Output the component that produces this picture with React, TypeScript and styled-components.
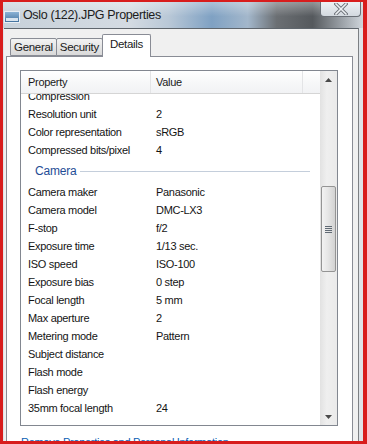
import React from 'react';
import styled, { createGlobalStyle } from 'styled-components';

const GlobalStyle = createGlobalStyle`
  html, body {
    margin: 0;
    padding: 0;
    background: #ffffff;
  }
  body {
    font-family: "Liberation Sans", Arial, sans-serif;
  }
`;

interface Prop {
  name: string;
  value?: string;
}

const imageProps: Prop[] = [
  { name: 'Compression' },
  { name: 'Resolution unit', value: '2' },
  { name: 'Color representation', value: 'sRGB' },
  { name: 'Compressed bits/pixel', value: '4' },
];

const cameraProps: Prop[] = [
  { name: 'Camera maker', value: 'Panasonic' },
  { name: 'Camera model', value: 'DMC-LX3' },
  { name: 'F-stop', value: 'f/2' },
  { name: 'Exposure time', value: '1/13 sec.' },
  { name: 'ISO speed', value: 'ISO-100' },
  { name: 'Exposure bias', value: '0 step' },
  { name: 'Focal length', value: '5 mm' },
  { name: 'Max aperture', value: '2' },
  { name: 'Metering mode', value: 'Pattern' },
  { name: 'Subject distance' },
  { name: 'Flash mode' },
  { name: 'Flash energy' },
  { name: '35mm focal length', value: '24' },
];

const tabs = ['General', 'Security', 'Details'];

const App = () => {
  return (
    <>
      <GlobalStyle />
      <Frame>
        <Window>
          <TitleBar>
            <TitleIcon width="16" height="12" viewBox="0 0 16 12">
              <defs>
                <linearGradient id="ti" x1="0" y1="0" x2="0" y2="1">
                  <stop offset="0" stopColor="#8fb6d8" />
                  <stop offset="1" stopColor="#3f6f9c" />
                </linearGradient>
              </defs>
              <rect x="0.5" y="0.5" width="15" height="11" fill="url(#ti)" stroke="#e8eef4" />
              <rect x="2" y="7" width="12" height="3" fill="#d9e4ee" />
            </TitleIcon>
            <TitleText>Oslo (122).JPG Properties</TitleText>
            <CloseButton>
              <svg width="14" height="12" viewBox="0 0 14 12">
                <path d="M2 1 L12 11 M12 1 L2 11" stroke="#6c7178" strokeWidth="3.4" strokeLinecap="square" />
                <path d="M2 1 L12 11 M12 1 L2 11" stroke="#eef1f4" strokeWidth="1.6" strokeLinecap="square" />
              </svg>
            </CloseButton>
          </TitleBar>
          <Client>
            <TabStrip>
              {tabs.map(t => (
                <Tab key={t} active={t === 'Details'}>
                  {t}
                </Tab>
              ))}
            </TabStrip>
            <Panel>
              <ListBox>
                <ListMain>
                  <Header>
                    <HeaderCell width={130}>Property</HeaderCell>
                    <HeaderCell width={152}>Value</HeaderCell>
                    <HeaderFiller />
                  </Header>
                  <Viewport>
                    <Rows>
                      {imageProps.map(p => (
                        <Row key={p.name}>
                          <span>{p.name}</span>
                          <span>{p.value}</span>
                        </Row>
                      ))}
                      <GroupRow>
                        <GroupTitle>Camera</GroupTitle>
                        <GroupLine />
                      </GroupRow>
                      {cameraProps.map(p => (
                        <Row key={p.name}>
                          <span>{p.name}</span>
                          <span>{p.value}</span>
                        </Row>
                      ))}
                    </Rows>
                  </Viewport>
                </ListMain>
                <ScrollBar>
                  <ArrowBox>
                    <svg width="7" height="4" viewBox="0 0 7 4">
                      <path d="M0 4 L3.5 0 L7 4 Z" fill="#4a4a4a" />
                    </svg>
                  </ArrowBox>
                  <Track>
                    <Thumb>
                      <svg width="7" height="7" viewBox="0 0 7 7">
                        <path d="M0 0.5 H7 M0 2.5 H7 M0 4.5 H7 M0 6.5 H7" stroke="#606a74" strokeWidth="1" />
                      </svg>
                    </Thumb>
                  </Track>
                  <ArrowBox>
                    <svg width="7" height="4" viewBox="0 0 7 4">
                      <path d="M0 0 L3.5 4 L7 0 Z" fill="#4a4a4a" />
                    </svg>
                  </ArrowBox>
                </ScrollBar>
              </ListBox>
              <RemoveLink>Remove Properties and Personal Information</RemoveLink>
            </Panel>
          </Client>
        </Window>
      </Frame>
    </>
  );
};

const Frame = styled.div`
  width: 367px;
  height: 444px;
  box-sizing: border-box;
  overflow: hidden;
  border-style: solid;
  border-color: #d81d1d;
  border-width: 2px 4px 3px 3px;
  background: #dfe4e9;
`;

const Window = styled.div`
  height: 100%;
  display: flex;
  flex-direction: column;
`;

const TitleBar = styled.div`
  height: 26px;
  flex-shrink: 0;
  display: flex;
  align-items: center;
  padding-left: 1px;
  background:
    linear-gradient(to bottom, rgba(255, 255, 255, 0.35), rgba(255, 255, 255, 0) 55%),
    linear-gradient(
      to right,
      #c7d1da 0%,
      #d4dbe2 35%,
      #b9c8d7 46%,
      #7fa1c3 58%,
      #a3b7cb 68%,
      #6b6f73 76%,
      #55595d 86%,
      #9aa0a6 94%,
      #d0d6dc 100%
    );
`;

const TitleIcon = styled.svg`
  flex-shrink: 0;
  margin-top: 3px;
`;

const TitleText = styled.span`
  margin-left: 3px;
  font-size: 12.5px;
  letter-spacing: -0.35px;
  color: #1c1c1c;
`;

const CloseButton = styled.div`
  margin-left: auto;
  margin-right: 2px;
  align-self: flex-start;
  width: 41px;
  height: 15px;
  box-sizing: border-box;
  border: 1px solid #6a6f76;
  border-top: none;
  border-radius: 0 0 4px 4px;
  background: linear-gradient(to bottom, #eef1f4, #d3d9df);
  display: flex;
  align-items: center;
  justify-content: center;
`;

const Client = styled.div`
  flex: 1;
  margin-left: 1px;
  margin-right: 4px;
  border-top: 1px solid #5f666d;
  border-right: 1px solid #7c7f83;
  background: #f0f0f0;
  padding: 5px 5px 0 2px;
  display: flex;
  flex-direction: column;
`;

const TabStrip = styled.div`
  height: 23px;
  display: flex;
  align-items: flex-end;
  padding-left: 4px;
  margin-bottom: -1px;
  position: relative;
  z-index: 1;
`;

const Tab = styled.div<{ active: boolean }>`
  box-sizing: border-box;
  height: ${p => (p.active ? '23px' : '18px')};
  margin-bottom: ${p => (p.active ? '0' : '1px')};
  margin-right: -1px;
  padding: ${p => (p.active ? '3px 7px 0' : '2px 3px 0')};
  border: 1px solid #898c95;
  border-bottom: ${p => (p.active ? 'none' : '1px solid #898c95')};
  border-radius: 2px 2px 0 0;
  background: ${p =>
    p.active ? '#ffffff' : 'linear-gradient(to bottom, #f3f3f3, #e5e5e5 50%, #d9d9d9)'};
  font-size: 11.5px;
  letter-spacing: -0.3px;
  color: #1a1a1a;
`;

const Panel = styled.div`
  flex: 1;
  background: #ffffff;
  border: 1px solid #898c95;
  padding: 13px 13px 0 13px;
`;

const ListBox = styled.div`
  width: 318px;
  height: 356px;
  box-sizing: border-box;
  border: 1px solid #828790;
  display: flex;
  background: #ffffff;
`;

const ListMain = styled.div`
  flex: 1;
  display: flex;
  flex-direction: column;
  min-width: 0;
`;

const Header = styled.div`
  height: 22px;
  flex-shrink: 0;
  display: flex;
  border-bottom: 1px solid #d5d5d5;
  background: linear-gradient(to bottom, #ffffff, #f7f8f9 50%, #f1f2f4);
`;

const HeaderCell = styled.div<{ width: number }>`
  width: ${p => p.width}px;
  box-sizing: border-box;
  border-right: 1px solid #e3e4e6;
  padding-left: ${p => (p.width === 130 ? '7px' : '5px')};
  display: flex;
  align-items: center;
  font-size: 11px;
  letter-spacing: -0.3px;
  color: #1a1a1a;
`;

const HeaderFiller = styled.div`
  flex: 1;
`;

const Viewport = styled.div`
  flex: 1;
  overflow: hidden;
`;

const Rows = styled.div`
  margin-top: -7px;
`;

const Row = styled.div`
  height: 18px;
  display: grid;
  grid-template-columns: 128px 1fr;
  align-items: center;
  padding-left: 7px;
  font-size: 11px;
  letter-spacing: -0.3px;
  color: #141414;
  white-space: nowrap;
`;

const GroupRow = styled.div`
  height: 24px;
  display: flex;
  align-items: center;
  padding-left: 14px;
  padding-right: 10px;
`;

const GroupTitle = styled.span`
  font-size: 12px;
  letter-spacing: -0.2px;
  color: #1f4d96;
`;

const GroupLine = styled.div`
  flex: 1;
  height: 1px;
  margin-left: 4px;
  background: #c4cedb;
`;

const ScrollBar = styled.div`
  width: 17px;
  flex-shrink: 0;
  display: flex;
  flex-direction: column;
  background: linear-gradient(to right, #e2e2e2, #efefef 40%, #eaeaea);
`;

const ArrowBox = styled.div`
  height: 17px;
  display: flex;
  align-items: center;
  justify-content: center;
`;

const Track = styled.div`
  flex: 1;
  padding-top: 98px;
  display: flex;
  justify-content: center;
`;

const Thumb = styled.div`
  width: 15px;
  height: 86px;
  box-sizing: border-box;
  border: 1px solid #949494;
  border-radius: 2px;
  background: linear-gradient(to right, #f2f2f2, #e6e6e6 45%, #d2d2d2);
  display: flex;
  align-items: center;
  justify-content: center;
`;

const RemoveLink = styled.div`
  margin-top: 10px;
  margin-left: 1px;
  font-size: 11px;
  letter-spacing: -0.3px;
  color: #0b5fb4;
`;

export default App;
